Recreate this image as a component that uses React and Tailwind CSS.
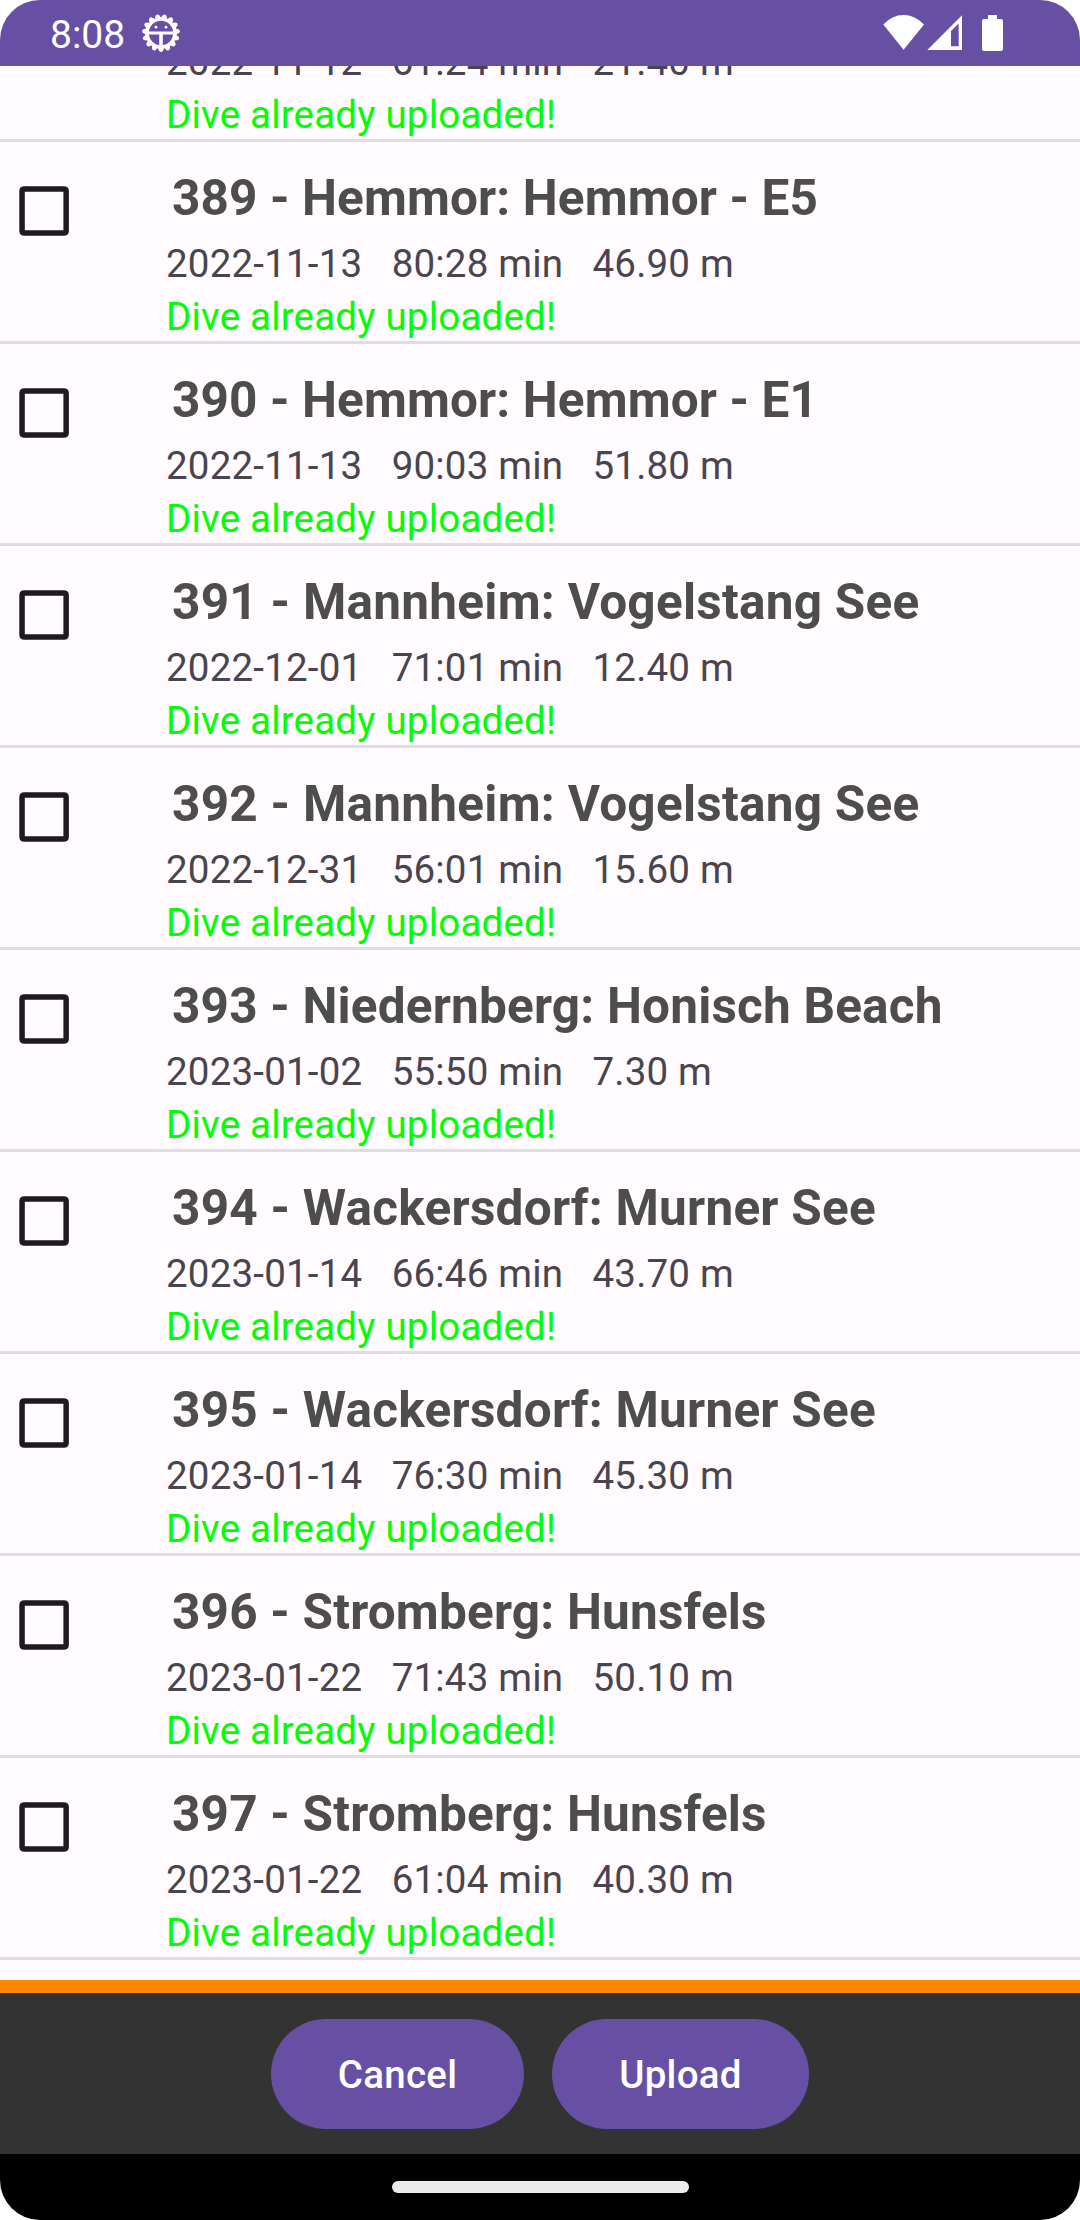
const dives = [
  { title: "389 - Hemmor: Hemmor - E5", date: "2022-11-13", time: "80:28 min", depth: "46.90 m", tracking: "tracking-[0.12px]" },
  { title: "390 - Hemmor: Hemmor - E1", date: "2022-11-13", time: "90:03 min", depth: "51.80 m", tracking: "tracking-[0.12px]" },
  { title: "391 - Mannheim: Vogelstang See", date: "2022-12-01", time: "71:01 min", depth: "12.40 m", tracking: "tracking-[0.27px]" },
  { title: "392 - Mannheim: Vogelstang See", date: "2022-12-31", time: "56:01 min", depth: "15.60 m", tracking: "tracking-[0.27px]" },
  { title: "393 - Niedernberg: Honisch Beach", date: "2023-01-02", time: "55:50 min", depth: "7.30 m", tracking: "tracking-[0.19px]" },
  { title: "394 - Wackersdorf: Murner See", date: "2023-01-14", time: "66:46 min", depth: "43.70 m", tracking: "tracking-[0.25px]" },
  { title: "395 - Wackersdorf: Murner See", date: "2023-01-14", time: "76:30 min", depth: "45.30 m", tracking: "tracking-[0.25px]" },
  { title: "396 - Stromberg: Hunsfels", date: "2023-01-22", time: "71:43 min", depth: "50.10 m", tracking: "tracking-[0.2px]" },
  { title: "397 - Stromberg: Hunsfels", date: "2023-01-22", time: "61:04 min", depth: "40.30 m", tracking: "tracking-[0.2px]" },
];

const teeth = Array.from({ length: 15 }, (_, i) => i * 24);

function GearIcon() {
  return (
    <svg className="ml-[17px] mt-[14px] size-[38px]" viewBox="-19 -19 38 38" fill="none" stroke="#fff">
      <circle r="13.9" strokeWidth="3.4" />
      {teeth.map((a) => (
        <path key={a} d="M-3.4 14.2 L-1.9 17.9 Q0 20 1.9 17.9 L3.4 14.2 Z" fill="#fff" stroke="none" transform={`rotate(${a})`} />
      ))}
      <path d="M-13 0H13" strokeWidth="3" />
      <path d="M0 0V14" strokeWidth="3.6" />
      <circle cx="-5" cy="-5.8" r="1.4" fill="#fff" stroke="none" />
      <circle cx="5" cy="-5.8" r="1.4" fill="#fff" stroke="none" />
    </svg>
  );
}

function StatusBar() {
  return (
    <header className="flex h-[66px] shrink-0 items-start bg-[#6750a4] text-white">
      <span className="ml-[50px] mt-[12px] text-[39px] leading-[46px]">8:08</span>
      <GearIcon />
      <svg className="ml-auto mr-[19px] mt-[14px] h-[38px] w-[80px]" viewBox="0 0 80 38" fill="#fff">
        <path d="M0.3 10.5 Q9 1 20.6 1 Q32 1 41 10.5 L20.6 35.8 Z" />
        <path fillRule="evenodd" d="M44.3 36 L79 1.2 V36 Z M68 17 V32.3 H75.7 V9.5 Z" />
      </svg>
      <svg className="mr-[77px] mt-[15px] h-[36px] w-[21px]" viewBox="0 0 21 36" fill="#fff">
        <path d="M6 0H15V4H19Q21 4 21 6V34Q21 36 19 36H2Q0 36 0 34V6Q0 4 2 4H6Z" />
      </svg>
    </header>
  );
}

function Checkbox() {
  return (
    <svg className="ml-[19px] mt-[44px] size-[50px] shrink-0" viewBox="0 0 50 50" role="checkbox" aria-checked="false">
      <path
        fill="#1c1b1f"
        fillRule="evenodd"
        d="M5.4 0.2H44.8Q49.9 0.2 49.9 5.3V44.7Q49.9 49.8 44.8 49.8H5.4Q0.3 49.8 0.3 44.7V5.3Q0.3 0.2 5.4 0.2Z M5.8 5.7V44.3H44.4V5.7Z"
      />
    </svg>
  );
}

function Details({ date, time, depth }) {
  return (
    <p className="whitespace-pre text-[38.5px] leading-[53px] tracking-[0.2px] text-[#49454f]">{`${date}   ${time}   ${depth}`}</p>
  );
}

function Uploaded() {
  return <p className="text-[38.5px] leading-[53px] tracking-[0.2px] text-[#00ff00]">Dive already uploaded!</p>;
}

function DiveRow({ title, date, time, depth, tracking }) {
  return (
    <li className="flex h-[202px] shrink-0 items-start border-b-3 border-[#e1dce1]">
      <Checkbox />
      <div className="ml-[97px] whitespace-nowrap pt-[25px]">
        <h2 className={`ml-[6px] h-[70px] text-[49.5px] font-bold leading-[62px] text-[#4d4d4d] ${tracking}`}>{title}</h2>
        <Details date={date} time={time} depth={depth} />
        <Uploaded />
      </div>
    </li>
  );
}

export default function App() {
  return (
    <div className="h-[2220px] w-[1080px] bg-white font-[Roboto,sans-serif]">
      <div className="flex h-full flex-col overflow-hidden rounded-[40px] bg-[#fffbfe]">
        <StatusBar />
        <main className="flex h-[1914px] shrink-0 flex-col justify-end overflow-hidden pb-5">
          <ul className="flex flex-col">
            {/* Row scrolled partly under the status bar */}
            <li className="flex h-[202px] shrink-0 flex-col border-b-3 border-[#e1dce1] pl-[166px] pt-[95px]">
              <Details date="2022-11-12" time="61:24 min" depth="21.40 m" />
              <Uploaded />
            </li>
            {dives.map((dive) => (
              <DiveRow key={dive.title} {...dive} />
            ))}
          </ul>
        </main>
        <footer className="shrink-0">
          <div className="flex h-[174px] items-start justify-center gap-[28px] border-t-[13px] border-[#ff8800] bg-[#333333] pt-[26px]">
            <button className="h-[110px] w-[253px] rounded-full bg-[#6750a4] pt-[2px] text-[38.5px] font-medium tracking-[0.27px] text-white">Cancel</button>
            <button className="h-[110px] w-[257px] rounded-full bg-[#6750a4] pt-[2px] text-[38.5px] font-medium tracking-[0.27px] text-white">Upload</button>
          </div>
          <div className="flex h-[66px] justify-center bg-black pt-[27px]">
            <div className="h-[12px] w-[297px] rounded-full bg-[#ebebeb]" />
          </div>
        </footer>
      </div>
    </div>
  );
}
